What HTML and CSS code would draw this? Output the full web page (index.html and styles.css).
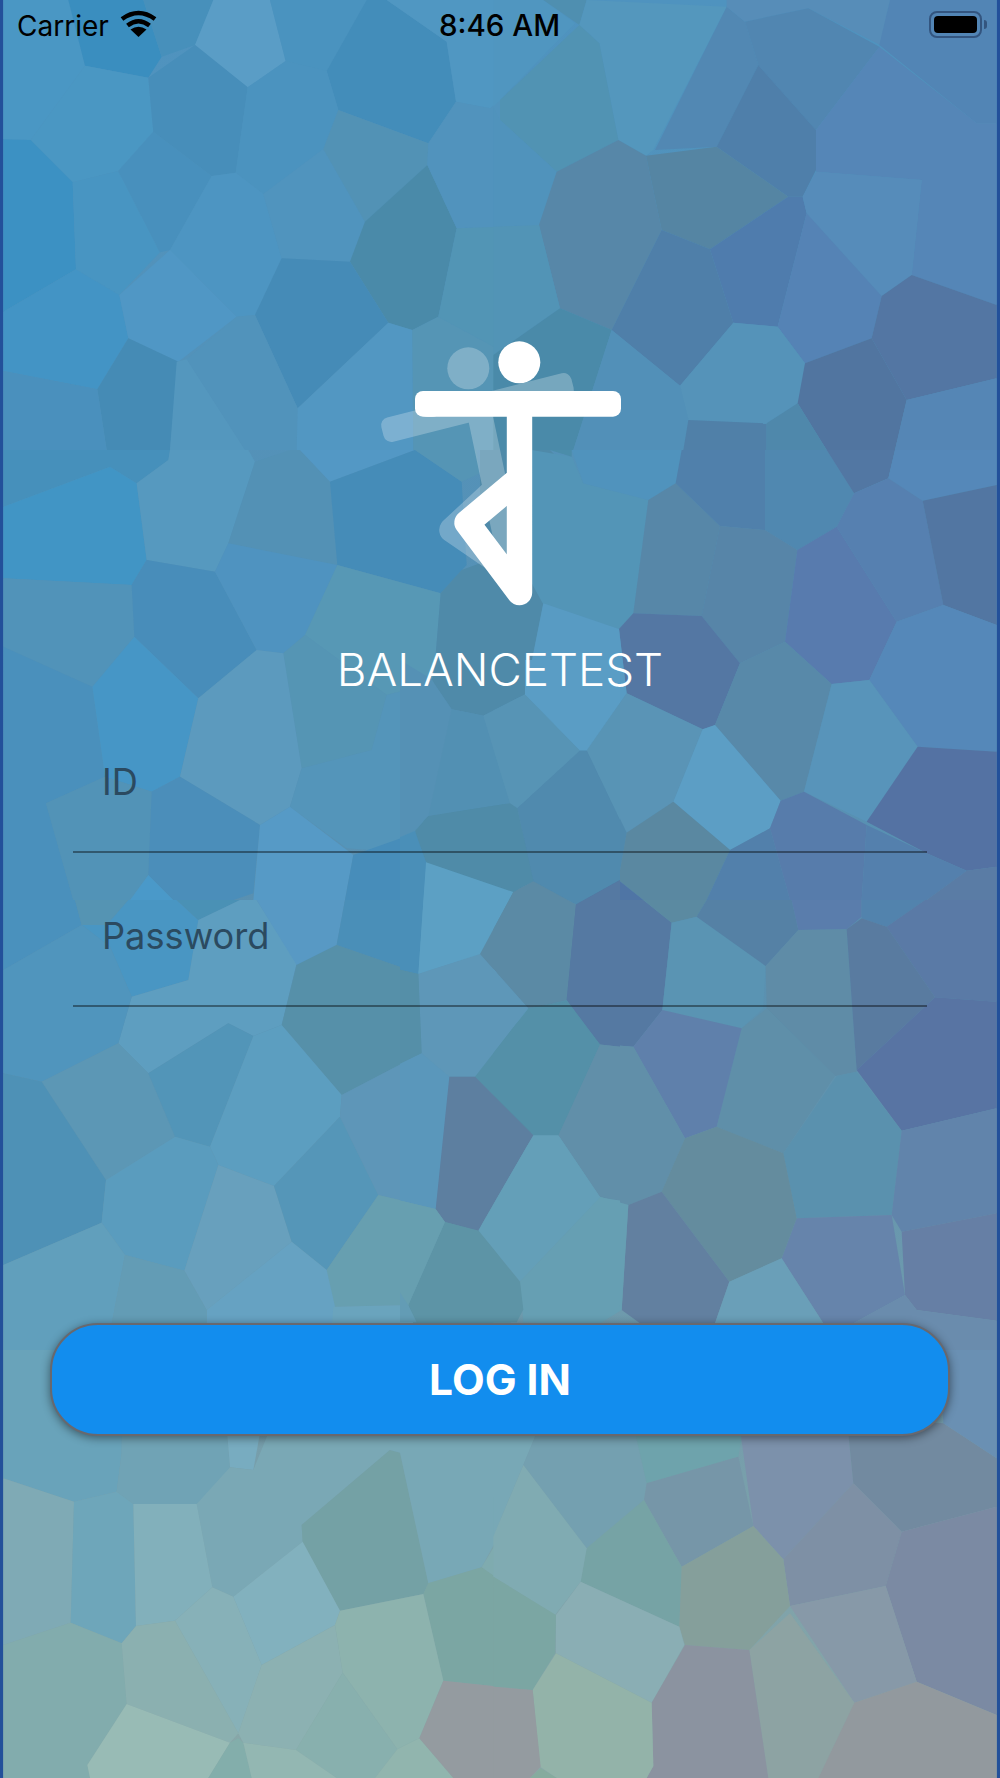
FILE: index.html
```html
<!DOCTYPE html>
<html lang="en">
<head>
    <meta charset="UTF-8">
    <title>BalanceTest</title>
    <link rel="stylesheet" href="styles.css">
</head>
<body>
    <div class="screen">
        <svg class="mosaic" viewBox="0 0 3000 5334" preserveAspectRatio="none">
            <defs>
                <linearGradient id="baseFill" x1="0" y1="0" x2="0" y2="1">
                    <stop offset="0" stop-color="#4f93bf"/>
                    <stop offset="0.55" stop-color="#5a90b0"/>
                    <stop offset="1" stop-color="#8aa8a8"/>
                </linearGradient>
            </defs>
            <rect width="3000" height="5334" fill="#23509a"/>
            <rect x="10" width="2980" height="5334" fill="url(#baseFill)"/>

            <!-- top left -->
            <g>
                <polygon fill="#4a97c4" points="10,0 205,0 255,197 92,420 10,418"/>
                <polygon fill="#3a8ebf" points="205,0 430,0 485,170 445,233 255,197"/>
                <polygon fill="#4790bb" points="430,0 640,0 585,135 485,170"/>
                <polygon fill="#5a9dc6" points="640,0 810,0 857,183 743,262 585,135"/>
                <polygon fill="#4a93bf" points="810,0 1100,0 980,213 857,183"/>
                <polygon fill="#438dba" points="1100,0 1160,0 1340,125 1368,305 1285,430 1015,330 980,213"/>
                <polygon fill="#5097c2" points="1160,0 1500,0 1500,330 1470,325 1368,305 1340,125"/>
                <polygon fill="#4a97c3" points="92,420 255,197 445,233 460,395 355,513 218,547"/>
                <polygon fill="#478eba" points="445,233 585,135 743,262 707,518 635,528 460,395"/>
                <polygon fill="#4b93bf" points="743,262 857,183 980,213 1015,330 970,447 790,582 707,518"/>
                <polygon fill="#3c91c3" points="10,418 92,420 218,547 228,808 10,935"/>
                <polygon fill="#4895c2" points="218,547 355,513 480,757 358,885 228,808"/>
                <polygon fill="#4890bd" points="355,513 460,395 635,528 510,750 480,757"/>
                <polygon fill="#4d95c2" points="635,528 707,518 790,582 845,775 765,945 710,950 510,750"/>
                <polygon fill="#5094be" points="790,582 970,447 1095,665 1050,785 845,775"/>
                <polygon fill="#5292b5" points="970,447 1015,330 1285,430 1282,495 1095,665"/>
                <polygon fill="#4a8aa9" points="1282,495 1370,685 1315,950 1237,990 1165,968 1050,785 1095,665"/>
                <polygon fill="#5193bd" points="1285,430 1368,305 1470,325 1500,300 1500,680 1370,685 1282,495"/>
                <polygon fill="#4394c5" points="10,935 228,808 358,885 385,1015 292,1168 10,1113"/>
                <polygon fill="#5097c5" points="358,885 510,750 710,950 535,1085 385,1015"/>
                <polygon fill="#458bb7" points="765,945 845,775 1050,785 1165,968 893,1225"/>
                <polygon fill="#5193bb" points="560,1078 710,950 765,945 893,1225 890,1350 735,1350"/>
                <polygon fill="#458bb5" points="385,1015 535,1085 510,1350 320,1350 292,1168"/>
                <polygon fill="#4a90bd" points="10,1113 292,1168 320,1350 10,1350"/>
                <polygon fill="#5497be" points="530,1085 560,1078 735,1350 510,1350"/>
                <polygon fill="#5297c2" points="893,1225 1165,968 1237,990 1240,1350 890,1350"/>
                <polygon fill="#5595b5" points="1237,990 1315,950 1500,1050 1500,1350 1240,1350"/>
                <polygon fill="#5295b5" points="1370,685 1500,680 1500,1050 1315,950"/>
            </g>

            <!-- top right -->
            <g transform="translate(1500,0)">
                <polygon fill="#5096c0" points="-20,0 130,0 225,70 0,300 -20,320"/>
                <polygon fill="#4f8fb0" points="130,0 260,0 238,75"/>
                <polygon fill="#5497bd" points="260,0 680,20 460,450 438,467 355,420 298,130 238,75"/>
                <polygon fill="#5193b3" points="0,300 238,75 298,130 355,420 170,515 0,360"/>
                <polygon fill="#5093bc" points="-20,320 0,360 170,515 117,675 0,680 -20,680"/>
                <polygon fill="#5288b3" points="680,20 735,65 775,195 650,440 465,450"/>
                <polygon fill="#578db8" points="680,20 680,0 1170,0 1140,135 925,25 735,65"/>
                <polygon fill="#5186b1" points="735,65 925,25 1138,140 948,390 775,195"/>
                <polygon fill="#5285b5" points="1170,0 1490,0 1490,370 1430,370 1138,135"/>
                <polygon fill="#4f7faa" points="775,195 948,390 948,510 908,590 865,590 650,440"/>
                <polygon fill="#5586b7" points="948,390 1138,140 1430,370 1490,370 1490,915 1235,825 1265,540 948,515"/>
                <polygon fill="#5585a3" points="438,467 650,440 865,590 630,748 485,690"/>
                <polygon fill="#5787a8" points="170,515 355,420 438,467 485,690 335,990 180,925 117,675"/>
                <polygon fill="#4f7cad" points="630,748 865,590 908,590 920,640 833,980 700,968"/>
                <polygon fill="#568cba" points="908,590 948,515 1265,540 1235,825 1145,888 920,640"/>
                <polygon fill="#5583b5" points="920,640 1145,888 1115,1015 915,1090 833,980"/>
                <polygon fill="#4f7fa9" points="335,990 485,690 630,748 700,968 540,1157"/>
                <polygon fill="#5376a3" points="1145,888 1235,825 1490,915 1490,1135 1220,1200 1115,1015"/>
                <polygon fill="#5593b9" points="540,1157 700,968 833,980 915,1090 893,1210 800,1270 565,1260"/>
                <polygon fill="#5175a0" points="915,1090 1115,1015 1220,1200 1185,1350 980,1350 893,1210"/>
                <polygon fill="#5294b6" points="-20,680 117,675 180,925 -20,1065"/>
                <polygon fill="#4a8aa9" points="180,925 335,990 220,1350 -20,1350 -20,1065"/>
                <polygon fill="#5290b8" points="335,990 540,1157 565,1260 550,1350 220,1350"/>
                <polygon fill="#5080a8" points="565,1260 800,1270 800,1350 550,1350"/>
                <polygon fill="#4f88ab" points="800,1270 893,1210 980,1350 800,1350"/>
                <polygon fill="#5586b5" points="1220,1200 1490,1135 1490,1350 1185,1350"/>
            </g>

            <!-- upper middle left -->
            <g transform="translate(0,1350)">
                <polygon fill="#4690bb" points="10,0 510,0 505,30 410,100 330,50 10,170"/>
                <polygon fill="#4195c5" points="10,170 330,50 410,100 440,330 395,405 10,385"/>
                <polygon fill="#5699bf" points="410,100 505,30 510,0 745,0 765,35 685,280 645,365 440,330"/>
                <polygon fill="#5391b5" points="765,35 870,0 900,0 990,95 1012,345 685,280"/>
                <polygon fill="#5398c5" points="900,0 1245,0 990,95"/>
                <polygon fill="#458cb8" points="990,95 1245,0 1385,95 1400,345 1322,430 1012,345"/>
                <polygon fill="#5595b5" points="1245,0 1430,0 1440,70 1385,95"/>
                <polygon fill="#5193b9" points="10,385 395,405 403,560 277,710 10,590"/>
                <polygon fill="#488dba" points="395,405 440,330 645,365 770,600 595,745 403,560"/>
                <polygon fill="#4f93c0" points="645,365 685,280 1012,345 915,555 850,610 770,600"/>
                <polygon fill="#5798b5" points="915,555 1012,345 1322,430 1300,700 1160,735"/>
                <polygon fill="#5595b4" points="850,610 915,555 1160,735 1115,900 905,955"/>
                <polygon fill="#4f8aa9" points="1322,430 1385,360 1440,340 1500,420 1500,790 1450,798 1355,775 1300,700"/>
                <polygon fill="#4a90bc" points="10,590 277,710 315,980 138,1060 220,1350 10,1350"/>
                <polygon fill="#4696c6" points="277,710 403,560 595,745 540,980 455,1025 315,980"/>
                <polygon fill="#5c9abe" points="595,745 770,600 850,610 905,955 870,1070 780,1125 540,980"/>
                <polygon fill="#5293b7" points="138,1060 315,980 455,1025 445,1275 390,1350 220,1350"/>
                <polygon fill="#4b8eba" points="455,1025 540,980 780,1125 760,1330 700,1350 520,1350 445,1275"/>
                <polygon fill="#5495ba" points="905,955 1115,900 1160,735 1300,700 1355,775 1280,1100 1245,1150 1110,1200 1040,1195 870,1070"/>
                <polygon fill="#569ac6" points="780,1125 870,1070 1060,1215 1035,1350 760,1350"/>
                <polygon fill="#478dba" points="1060,1215 1245,1150 1280,1240 1270,1350 1035,1350"/>
                <polygon fill="#4a99c9" points="390,1350 445,1275 520,1350"/>
                <polygon fill="#4f8ca8" points="1245,1150 1280,1100 1500,1060 1500,1315 1280,1240"/>
                <polygon fill="#5da0c5" points="1280,1240 1500,1315 1500,1350 1270,1350"/>
                <polygon fill="#5a90b5" points="1355,775 1450,798 1500,790 1500,1060 1280,1100"/>
            </g>

            <!-- upper middle right -->
            <g transform="translate(1500,1350)">
                <polygon fill="#4f8aa9" points="-60,0 150,0 250,100 100,390 130,460 75,735 -60,780"/>
                <polygon fill="#5395b7" points="95,0 215,20 250,100 445,150 400,490 355,537 128,460 95,400"/>
                <polygon fill="#5093bd" points="215,0 545,0 527,100 445,150 250,100"/>
                <polygon fill="#4b8daa" points="150,0 215,0 215,20"/>
                <polygon fill="#5787a8" points="445,150 527,100 660,228 605,498 400,490"/>
                <polygon fill="#5080ab" points="545,0 795,0 795,240 660,228 527,100"/>
                <polygon fill="#5088b0" points="795,0 980,0 1062,130 1010,230 892,300 795,240"/>
                <polygon fill="#5277a3" points="980,0 1185,0 1165,85 1062,130"/>
                <polygon fill="#5588b9" points="1185,0 1490,0 1490,105 1268,152 1165,85"/>
                <polygon fill="#5785a8" points="660,228 795,240 892,300 855,575 720,640 605,498"/>
                <polygon fill="#587bae" points="892,300 1010,230 1190,515 1108,690 995,702 855,575"/>
                <polygon fill="#5680b0" points="1010,230 1062,130 1165,85 1268,152 1330,465 1190,515"/>
                <polygon fill="#5276a2" points="1268,152 1490,105 1490,525 1330,465"/>
                <polygon fill="#5588b9" points="1190,515 1330,465 1490,525 1490,905 1253,890 1108,690"/>
                <polygon fill="#5477a3" points="400,490 605,498 720,640 645,825 608,838 380,730 357,537"/>
                <polygon fill="#589bc3" points="130,460 357,537 380,730 262,903 240,903 75,735"/>
                <polygon fill="#5889a9" points="720,640 855,575 995,702 912,1025 842,1052 645,825"/>
                <polygon fill="#5894ba" points="995,702 1108,690 1253,890 1100,1115 912,1025"/>
                <polygon fill="#5a94b6" points="380,730 608,838 520,1055 380,1148 262,903"/>
                <polygon fill="#5c9ec5" points="608,838 645,825 842,1052 810,1135 690,1200 520,1055"/>
                <polygon fill="#5896b5" points="-20,780 75,735 240,903 52,1075 -20,950"/>
                <polygon fill="#5089ad" points="52,1075 240,903 262,903 380,1148 355,1290 250,1350 30,1350 90,1310 60,1080"/>
                <polygon fill="#5a88a1" points="380,1148 520,1055 690,1200 620,1350 430,1350 355,1290"/>
                <polygon fill="#5280ab" points="690,1200 810,1135 870,1350 620,1350"/>
                <polygon fill="#577cab" points="842,1052 912,1025 1100,1125 1085,1350 870,1350 810,1135"/>
                <polygon fill="#5472a3" points="1100,1115 1253,890 1490,905 1490,1250 1400,1262 1280,1210"/>
                <polygon fill="#5480ad" points="1100,1125 1280,1210 1400,1262 1280,1350 1085,1350"/>
                <polygon fill="#5a7ca5" points="1400,1262 1490,1250 1490,1350 1280,1350"/>
                <polygon fill="#4f8da8" points="-20,1050 52,1075 60,1310 30,1350 -20,1350"/>
                <polygon fill="#4f75a5" points="250,1350 355,1290 430,1350"/>
            </g>

            <!-- lower middle left -->
            <g transform="translate(0,2700)">
                <polygon fill="#4a91bd" points="10,0 225,0 245,75 10,210"/>
                <polygon fill="#5594b3" points="225,0 385,0 320,75 245,75"/>
                <polygon fill="#4996c3" points="385,0 530,0 595,60 565,240 395,290 330,140 245,75 320,75"/>
                <polygon fill="#4a91b5" points="530,0 720,0 595,60"/>
                <polygon fill="#5e9ec0" points="720,0 770,0 890,190 845,375 760,408 685,370 445,520 355,430 395,290 565,240 595,60"/>
                <polygon fill="#5899c4" points="770,0 1035,0 1010,135 890,195"/>
                <polygon fill="#4a8fb8" points="1035,0 1270,0 1255,220 1010,135"/>
                <polygon fill="#5ca0c4" points="1270,0 1500,0 1500,80 1440,165 1255,220"/>
                <polygon fill="#5b8aa5" points="1500,80 1440,165 1500,230"/>
                <polygon fill="#5690a9" points="890,195 1010,135 1255,220 1265,460 1025,585 845,375"/>
                <polygon fill="#5e97b8" points="1255,220 1440,165 1500,230 1500,530 1425,530 1345,530 1265,460"/>
                <polygon fill="#5095bd" points="10,210 245,75 330,140 395,290 355,430 125,545 10,520"/>
                <polygon fill="#5c97b5" points="125,545 355,430 445,520 525,710 318,840"/>
                <polygon fill="#5295b8" points="445,520 685,370 760,408 630,740 525,710"/>
                <polygon fill="#5c9ec0" points="630,740 760,408 845,375 1025,585 1020,650 822,858 655,795"/>
                <polygon fill="#4e91b6" points="10,520 125,545 318,840 305,968 10,1095"/>
                <polygon fill="#5a9cbe" points="318,840 525,710 630,740 655,795 553,1112 375,1065 305,968"/>
                <polygon fill="#68a0bd" points="655,795 822,858 875,1025 620,1230 553,1112"/>
                <polygon fill="#5596b8" points="822,858 1020,650 1135,885 980,1110 875,1025"/>
                <polygon fill="#5e96b8" points="1025,585 1265,460 1345,530 1305,925 1135,885 1020,650"/>
                <polygon fill="#5d7fa0" points="1345,530 1425,530 1500,610 1500,830 1437,995 1335,965 1305,925"/>
                <polygon fill="#679fb0" points="1135,885 1305,925 1335,965 1225,1215 1000,1220 980,1110"/>
                <polygon fill="#5d94a6" points="1335,965 1437,995 1500,1070 1500,1350 1260,1350 1225,1215"/>
                <polygon fill="#659db0" points="1437,995 1500,830 1500,1070"/>
                <polygon fill="#66a2c2" points="620,1230 875,1025 980,1110 1005,1220 990,1350 620,1350"/>
                <polygon fill="#6aa4bd" points="1000,1220 1225,1215 1260,1350 990,1350"/>
                <polygon fill="#619fbc" points="305,968 375,1065 320,1350 10,1350 10,1095"/>
                <polygon fill="#639cb5" points="375,1065 553,1112 620,1230 620,1350 320,1350"/>
            </g>

            <!-- lower middle right -->
            <g transform="translate(1500,2700)">
                <polygon fill="#598ba6" points="-20,0 225,15 200,300 88,330 -20,200"/>
                <polygon fill="#5579a2" points="225,15 245,0 430,0 515,68 487,330 400,440 300,432 200,300"/>
                <polygon fill="#5b8aa1" points="430,0 620,0 590,50 515,68"/>
                <polygon fill="#5a94b3" points="515,68 590,50 797,198 790,325 725,385 487,330"/>
                <polygon fill="#5581a5" points="620,0 875,0 895,90 797,198 590,50"/>
                <polygon fill="#5a7dac" points="875,0 1085,0 1085,50 1040,88 895,90"/>
                <polygon fill="#5283ad" points="1085,0 1275,0 1160,80 1085,55"/>
                <polygon fill="#5a7aa6" points="1275,0 1490,0 1490,305 1305,292 1160,80"/>
                <polygon fill="#5f8ca7" points="797,198 895,90 1040,88 1070,515 1005,528 800,325"/>
                <polygon fill="#597ba0" points="1040,88 1085,55 1160,80 1305,292 1070,510"/>
                <polygon fill="#5f8fa9" points="725,385 800,325 1005,528 850,760 650,680"/>
                <polygon fill="#5874a3" points="1070,510 1305,292 1490,305 1490,625 1205,692"/>
                <polygon fill="#5a91ae" points="1010,528 1070,515 1205,692 1175,945 890,955 850,760"/>
                <polygon fill="#6184ab" points="1205,692 1490,625 1490,940 1205,995 1175,945"/>
                <polygon fill="#667fa5" points="1205,995 1490,940 1490,1262 1250,1230 1215,1185"/>
                <polygon fill="#6684ab" points="890,955 1175,945 1215,1185 1060,1270 970,1270 845,1075"/>
                <polygon fill="#6a8cad" points="1215,1185 1250,1230 1490,1262 1490,1350 1000,1350 1060,1270"/>
                <polygon fill="#5f80ab" points="400,440 487,330 725,385 650,680 555,715"/>
                <polygon fill="#618fa9" points="300,432 400,440 555,715 485,875 385,915 300,890 178,708"/>
                <polygon fill="#5490a8" points="88,330 200,300 300,432 178,708 100,708 -20,600 -20,440"/>
                <polygon fill="#648c9e" points="555,715 650,680 850,760 890,955 845,1075 688,1145 485,875"/>
                <polygon fill="#6280a0" points="385,915 485,875 688,1145 645,1270 420,1270 365,1230"/>
                <polygon fill="#649fb8" points="100,708 178,708 300,890 60,1110 0,1075 -20,880"/>
                <polygon fill="#669fb3" points="300,890 385,915 365,1230 300,1270 110,1270 70,1220 60,1150"/>
                <polygon fill="#6398a6" points="-20,1080 60,1150 70,1225 30,1270 -20,1270"/>
                <polygon fill="#6a9fb8" points="645,1270 688,1145 845,1075 970,1270"/>
                <polygon fill="#5ca0c5" points="0,235 88,330 -20,440 -20,200"/>
                <polygon fill="#5f80a5" points="-20,600 100,708 -20,880"/>
            </g>

            <!-- centre band, x 400-620, y 660-1320 -->
            <g transform="translate(1200,1980) scale(1,1.282)">
                <polygon fill="#5591b5" points="0,0 95,45 155,115 85,365 45,400 0,415"/>
                <polygon fill="#4f8aa9" points="95,45 130,0 375,0 375,80 250,130 155,115"/>
                <polygon fill="#5290b3" points="155,115 250,130 330,335 85,365"/>
                <polygon fill="#5794b5" points="250,130 375,80 540,212 352,347 330,335"/>
                <polygon fill="#5a9dc5" points="375,80 375,0 660,0 660,100 560,212 540,212"/>
                <polygon fill="#5894b5" points="560,212 660,100 660,375"/>
                <polygon fill="#508aae" points="352,347 540,212 560,212 660,375 660,515 528,572 400,518"/>
                <polygon fill="#4f8ba8" points="85,365 330,335 352,347 400,518 340,543 78,473 45,400"/>
                <polygon fill="#4a8fb8" points="0,415 45,400 78,473 55,735 0,725"/>
                <polygon fill="#5ca0c4" points="78,473 340,543 240,688 55,735"/>
                <polygon fill="#5b8aa5" points="240,688 340,543 400,518 528,572 500,795 385,815"/>
                <polygon fill="#5579a2" points="500,795 528,572 660,515 660,905 600,900"/>
                <polygon fill="#5e97b8" points="55,735 240,688 385,815 225,975 148,975 65,920"/>
                <polygon fill="#558fa8" points="0,725 55,735 65,920 0,945"/>
                <polygon fill="#5490a8" points="225,975 385,815 500,800 600,900 475,1112 400,1112"/>
                <polygon fill="#5d7fa0" points="148,975 225,975 400,1112 235,1335 135,1315 107,1285"/>
                <polygon fill="#5a97bb" points="0,945 65,920 148,975 107,1285 0,1265"/>
                <polygon fill="#618fa9" points="600,900 660,905 660,1265 600,1255 475,1112"/>
                <polygon fill="#649fb8" points="235,1335 400,1112 475,1112 600,1258 360,1455"/>
                <polygon fill="#669fb3" points="360,1455 600,1258 660,1265 660,1510 600,1550 370,1550"/>
                <polygon fill="#5d94a6" points="135,1315 235,1335 360,1455 370,1520 350,1550 50,1550 25,1510"/>
                <polygon fill="#679fb0" points="0,1265 107,1285 135,1315 25,1510 0,1480"/>
                <polygon fill="#639cb5" points="0,1480 25,1510 50,1550 0,1550"/>
            </g>

            <!-- bottom left -->
            <g transform="translate(0,4050)">
                <polygon fill="#69a3ba" points="10,0 370,0 365,310 350,425 222,455 10,385"/>
                <polygon fill="#70a3b5" points="370,0 660,0 690,355 595,462 400,462 350,425 365,310"/>
                <polygon fill="#78acc0" points="660,0 825,0 760,360 690,352"/>
                <polygon fill="#7aa8b5" points="825,200 1170,200 1170,300 905,525 908,575 700,740 637,712 590,462 690,352 760,360"/>
                <polygon fill="#74a1a5" points="1170,300 1200,308 1285,700 1270,732 1020,782 908,575 905,525"/>
                <polygon fill="#78a8b6" points="1170,200 1500,200 1500,550 1445,652 1285,700 1200,308 1170,300"/>
                <polygon fill="#7ba6a3" points="1270,732 1285,700 1445,652 1500,690 1500,1010 1330,992"/>
                <polygon fill="#7fabaf" points="1445,652 1500,560 1500,690"/>
                <polygon fill="#7faab5" points="10,385 222,455 212,818 10,885"/>
                <polygon fill="#6ea6ba" points="222,455 350,425 400,462 408,828 365,880 212,818"/>
                <polygon fill="#82b0bb" points="400,462 590,462 637,712 525,812 408,828"/>
                <polygon fill="#87b1b8" points="525,812 637,712 700,740 785,945 715,1150"/>
                <polygon fill="#82b1be" points="700,740 908,575 1020,782 1005,825 785,945"/>
                <polygon fill="#82acad" points="10,885 212,818 365,880 380,1062 262,1245 270,1284 10,1284"/>
                <polygon fill="#8bb0b0" points="365,880 408,828 525,812 715,1150 690,1178 380,1062"/>
                <polygon fill="#8cb1b2" points="785,945 1005,825 1028,968 888,1200 730,1178 715,1150"/>
                <polygon fill="#8db3ae" points="1020,782 1270,732 1330,992 1258,1165 1192,1198 1028,968 1005,825"/>
                <polygon fill="#88b0ae" points="1028,968 1192,1198 1125,1284 1010,1284 888,1200"/>
                <polygon fill="#98bbb5" points="380,1062 690,1178 625,1284 270,1284 262,1245"/>
                <polygon fill="#83aeab" points="625,1284 690,1178 715,1165 730,1178 755,1284"/>
                <polygon fill="#93b7b2" points="730,1178 888,1200 1010,1284 755,1284"/>
                <polygon fill="#91b5ae" points="1192,1198 1258,1165 1360,1284 1125,1284"/>
                <polygon fill="#949ba0" points="1330,992 1500,1010 1500,1284 1360,1284 1258,1165"/>
            </g>

            <!-- bottom right -->
            <g transform="translate(1500,4050)">
                <polygon fill="#78a8b6" points="-20,200 130,200 70,345 -20,560"/>
                <polygon fill="#74a0b0" points="70,345 130,200 395,200 440,400 432,450 260,595"/>
                <polygon fill="#6ea3ac" points="395,200 735,200 715,320 440,400"/>
                <polygon fill="#7696a8" points="440,400 715,320 760,528 545,650 432,450"/>
                <polygon fill="#7c91ab" points="715,200 1040,200 1060,400 850,628 760,528"/>
                <polygon fill="#728aa0" points="1040,200 1330,220 1490,325 1490,470 1205,545 1060,400"/>
                <polygon fill="#6a90b3" points="1320,0 1490,0 1490,325 1330,220"/>
                <polygon fill="#7e90a5" points="1060,400 1205,545 1157,708 870,768 850,628"/>
                <polygon fill="#7b8aa3" points="1205,545 1490,470 1490,1095 1250,995 1157,708"/>
                <polygon fill="#76a3a5" points="260,595 432,450 545,650 538,830 242,695"/>
                <polygon fill="#80abb2" points="70,345 260,595 242,695 165,795 -20,680 -20,560"/>
                <polygon fill="#859f9b" points="545,650 760,528 850,628 870,768 748,900 555,885 538,830"/>
                <polygon fill="#8aaeb4" points="242,695 538,830 553,885 455,1058 168,910 168,795"/>
                <polygon fill="#7ba6a3" points="-20,680 168,795 165,910 98,1020 -20,1010"/>
                <polygon fill="#8799a8" points="870,768 1157,708 1250,995 1063,1058"/>
                <polygon fill="#8da3a3" points="748,900 870,790 1063,1058 955,1284 805,1284"/>
                <polygon fill="#8b93a0" points="555,885 748,900 805,1284 440,1284 460,1248 455,1058"/>
                <polygon fill="#93b3a9" points="168,910 455,1058 460,1248 440,1284 170,1284 120,1250 98,1020"/>
                <polygon fill="#949ba0" points="-20,1010 98,1020 122,1250 90,1284 -20,1284"/>
                <polygon fill="#86ab9e" points="90,1284 122,1255 170,1284"/>
                <polygon fill="#92999e" points="1063,1058 1250,995 1490,1095 1490,1284 955,1284"/>
            </g>
        </svg>

        <div class="status-bar">
            <div class="status-left">
                <span class="carrier">Carrier</span>
                <svg class="wifi" viewBox="0 0 37 27">
                    <path d="M2 9Q18.500 -3 35 9M7.500 15.500Q18.500 7 29.500 15.500" fill="none" stroke="#000" stroke-width="4.500"/>
                    <path d="M18.500 27L10.500 19.500Q18.500 14 26.500 19.500Z" fill="#000"/>
                </svg>
            </div>
            <span class="clock">8:46 AM</span>
            <div class="status-right">
                <div class="battery"><div class="battery-fill"></div></div>
                <div class="battery-nub"></div>
            </div>
        </div>

        <!-- logo: x 370-630, y 335-615 of the page -->
        <svg class="logo" viewBox="370 335 260 280">
            <g class="logo-ghost">
                <circle cx="468.300" cy="368.300" r="21"/>
                <rect x="-98" y="-12.500" width="196" height="25" rx="8" transform="translate(477.500,407.500) rotate(-14.200)"/>
                <path d="M481 420L513 572L451.700 530L498 487" fill="none" stroke="#fff" stroke-width="25" stroke-linejoin="round" stroke-linecap="round"/>
            </g>
            <circle cx="519.300" cy="362.300" r="21" fill="#fff"/>
            <rect x="415" y="391" width="206" height="25.700" rx="8" fill="#fff"/>
            <rect x="415" y="391" width="30" height="25.700" rx="12.800" fill="#fff"/>
            <path d="M519.500 410V592.500L467 522.700L519.500 478.800" fill="none" stroke="#fff" stroke-width="25.400" stroke-linejoin="round" stroke-linecap="round"/>
        </svg>

        <h1 class="app-name">BALANCETEST</h1>

        <div class="field field-first"><span class="field-label">ID</span></div>
        <div class="field"><span class="field-label">Password</span></div>

        <button class="login-btn">LOG IN</button>
    </div>
</body>
</html>
```

FILE: styles.css
```css
* {
    margin: 0;
    padding: 0;
    box-sizing: border-box;
}

body {
    font-family: Inter, "Liberation Sans", sans-serif;
    width: 1000px;
    height: 1778px;
    overflow: hidden;
}

.screen {
    position: relative;
    width: 1000px;
    height: 1778px;
    display: flex;
    flex-direction: column;
    overflow: hidden;
}

.mosaic {
    position: absolute;
    top: 0;
    left: 0;
    width: 1000px;
    height: 1778px;
}

.status-bar {
    position: relative;
    height: 50px;
    padding: 9px 13px 0 17px;
    display: flex;
    align-items: flex-start;
    justify-content: space-between;
    color: #000;
    font-size: 28px;
    line-height: 34px;
}

.status-left {
    flex: 1;
    display: flex;
    align-items: flex-start;
    gap: 11px;
}

.wifi {
    width: 37px;
    height: 27px;
    margin-top: 1px;
}

.clock {
    margin: -1px 5px 0 0;
    font-size: 29.500px;
    font-weight: 500;
}

.status-right {
    flex: 1;
    display: flex;
    justify-content: flex-end;
    align-items: center;
    height: 30px;
}

.battery {
    width: 53px;
    height: 27px;
    border: 2px solid #33557f;
    border-radius: 8px;
    padding: 3px;
}

.battery-fill {
    width: 100%;
    height: 100%;
    background: #000;
    border-radius: 4px;
}

.battery-nub {
    width: 3px;
    height: 9px;
    margin-left: 2px;
    background: #33557f;
    border-radius: 0 3px 3px 0;
}

.logo {
    position: relative;
    display: block;
    width: 260px;
    height: 280px;
    margin: 285px auto 0;
}

.logo-ghost {
    fill: #fff;
    opacity: 0.25;
}

.app-name {
    position: relative;
    margin-top: 27px;
    color: #fff;
    font-size: 45.700px;
    line-height: 56px;
    font-weight: 350;
    text-align: center;
}

.field {
    position: relative;
    margin: 61px 73px 0;
    padding: 0 0 47px 29px;
    border-bottom: 2px solid rgba(0, 0, 0, 0.4);
    font-size: 36.200px;
    line-height: 44px;
    color: #2b4a60;
}

.field-first {
    margin-top: 62px;
}

.login-btn {
    position: relative;
    width: 900px;
    height: 113px;
    margin: 316px auto 0;
    display: block;
    background: #128dee;
    border: 2px solid #68686e;
    border-radius: 48px;
    box-shadow: 0 2px 10px rgba(0, 0, 0, 0.45);
    color: #fff;
    font-family: inherit;
    font-size: 42.500px;
    font-weight: 700;
}
```
